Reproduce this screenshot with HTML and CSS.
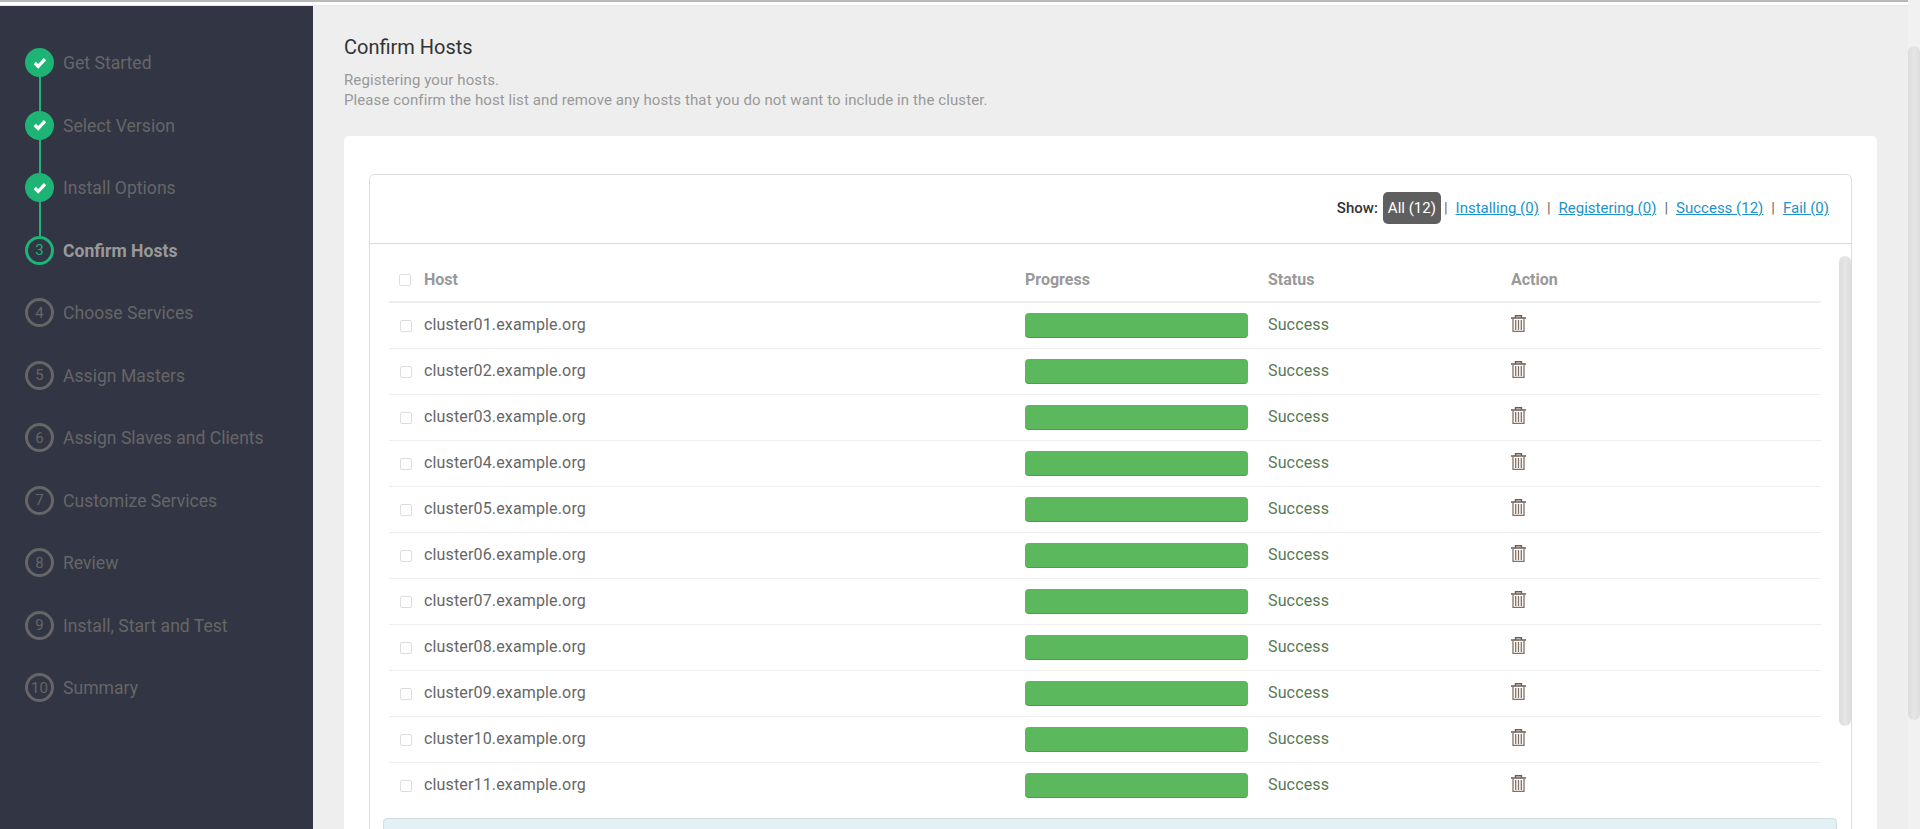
FILE: index.html
```html
<!DOCTYPE html>
<html lang="en">
<head>
    <meta charset="UTF-8">
    <meta name="viewport" content="width=device-width, initial-scale=1.0">
    <title>Confirm Hosts</title>
    <link rel="stylesheet" href="styles.css">
</head>
<body>
    <div class="top-strip"></div>
    <div class="wizard">
        <ul class="steps">
            <li class="step done"><span class="bubble"><svg width="14" height="12" viewBox="0 0 14 12"><polyline points="1.8,6 5.2,9.4 12,2.2" fill="none" stroke="#fff" stroke-width="3.2"/></svg></span><span class="step-name">Get Started</span></li>
            <li class="step done"><span class="bubble"><svg width="14" height="12" viewBox="0 0 14 12"><polyline points="1.8,6 5.2,9.4 12,2.2" fill="none" stroke="#fff" stroke-width="3.2"/></svg></span><span class="step-name">Select Version</span></li>
            <li class="step done"><span class="bubble"><svg width="14" height="12" viewBox="0 0 14 12"><polyline points="1.8,6 5.2,9.4 12,2.2" fill="none" stroke="#fff" stroke-width="3.2"/></svg></span><span class="step-name">Install Options</span></li>
            <li class="step active"><span class="bubble">3</span><span class="step-name">Confirm Hosts</span></li>
            <li class="step"><span class="bubble">4</span><span class="step-name">Choose Services</span></li>
            <li class="step"><span class="bubble">5</span><span class="step-name">Assign Masters</span></li>
            <li class="step"><span class="bubble">6</span><span class="step-name">Assign Slaves and Clients</span></li>
            <li class="step"><span class="bubble">7</span><span class="step-name">Customize Services</span></li>
            <li class="step"><span class="bubble">8</span><span class="step-name">Review</span></li>
            <li class="step"><span class="bubble">9</span><span class="step-name">Install, Start and Test</span></li>
            <li class="step"><span class="bubble">10</span><span class="step-name">Summary</span></li>
        </ul>

        <main class="content">
            <h1>Confirm Hosts</h1>
            <p class="intro">Registering your hosts.<br>Please confirm the host list and remove any hosts that you do not want to include in the cluster.</p>

            <div class="card">
                <div class="panel">
                    <div class="panel-head">
                        <b>Show:</b>
                        <span class="pill">All (12)</span>
                        <span class="sep first">|</span>
                        <a href="#">Installing (0)</a>
                        <span class="sep">|</span>
                        <a href="#">Registering (0)</a>
                        <span class="sep">|</span>
                        <a href="#">Success (12)</a>
                        <span class="sep">|</span>
                        <a href="#">Fail (0)</a>
                    </div>
                    <div class="panel-body">
                        <table class="hosts">
                            <thead>
                                <tr>
                                    <th class="col-host"><input type="checkbox" class="tick head-tick">Host</th>
                                    <th class="col-bar">Progress</th>
                                    <th class="col-status">Status</th>
                                    <th>Action</th>
                                </tr>
                            </thead>
                            <tbody id="rows"></tbody>
                        </table>
                        <div class="notice"></div>
                        <div class="thumb inner-thumb"></div>
                    </div>
                </div>
            </div>
        </main>

        <div class="page-scroll"><div class="thumb"></div></div>
    </div>

    <script>
        // same row for every host
        var rows = '';
        for (var i = 1; i <= 11; i++) {
            var name = 'cluster' + (i < 10 ? '0' + i : i) + '.example.org';
            rows += '<tr><td class="lift"><input type="checkbox" class="tick">' + name + '</td>' +
                '<td><div class="bar"></div></td>' +
                '<td class="lift ok">Success</td>' +
                '<td class="lift"><svg class="trash" width="15" height="17" viewBox="0 0 15 17">' +
                '<path d="M0 3h15M4.5 2.5V.7h6v1.8" fill="none" stroke="#6b5d54" stroke-width="1.4"/>' +
                '<path d="M2 3.5v12.8h11V3.5M4.7 5v10M7.5 5v10M10.3 5v10" fill="none" stroke="#85705f" stroke-width="1.3"/>' +
                '</svg></td></tr>';
        }
        document.getElementById('rows').innerHTML = rows;
    </script>
</body>
</html>
```

FILE: styles.css
```css
* {
    box-sizing: border-box;
}

html, body {
    height: 100%;
    margin: 0;
    overflow: hidden;
}

body {
    display: flex;
    flex-direction: column;
    font-family: Roboto, "Liberation Sans", sans-serif;
    font-size: 15px;
    background-color: #fff;
}

.top-strip {
    height: 6px;
    flex: none;
    background-color: #fff;
    border-top: 2px solid #b8b8b8;
    border-bottom: 1px solid #e8e8e8;
}

.wizard {
    flex: 1;
    display: flex;
    min-height: 0;
}

/* left column */
.steps {
    width: 313px;
    flex: none;
    margin: 0;
    padding: 42px 0 0 25px;
    list-style: none;
    background-color: #323544;
}

.step {
    position: relative;
    display: flex;
    align-items: flex-start;
    height: 62.5px;
    color: #666;
    font-size: 17.6px;
}

.bubble {
    width: 29px;
    height: 29px;
    flex: none;
    display: flex;
    align-items: center;
    justify-content: center;
    border: 3px solid #666;
    border-radius: 50%;
    font-size: 15px;
}

.step-name {
    margin-left: 9px;
    line-height: 31px;
}

.step.done .bubble {
    background-color: #1eb475;
    border-color: #1eb475;
}

.step.done::after {
    content: "";
    position: absolute;
    left: 14px;
    top: 28px;
    width: 2px;
    height: 36px;
    background-color: #1eb475;
}

.step.active {
    color: #999;
    font-weight: 700;
}

.step.active .bubble {
    border-color: #1eb475;
    color: #1eb475;
    font-weight: 400;
}

/* main area */
.content {
    flex: 1;
    min-width: 0;
    padding: 0 31px;
    background-color: #eee;
    overflow: hidden;
}

h1 {
    margin: 31px 0 0;
    font-size: 20px;
    font-weight: 400;
    line-height: 21px;
    color: #333;
}

.intro {
    margin: 12px 0 0;
    font-size: 15px;
    letter-spacing: 0.1px;
    line-height: 20px;
    color: #999;
}

.card {
    margin-top: 26px;
    padding: 38px 25px 0 25px;
    height: 800px;
    background-color: #fff;
    border-radius: 5px;
}

.panel {
    border: 1px solid #ddd;
    border-radius: 5px;
}

.panel-head {
    display: flex;
    align-items: center;
    justify-content: flex-end;
    height: 69px;
    padding: 0 22px 2px 0;
    border-bottom: 1px solid #ddd;
    color: #333;
}

.panel-head b {
    font-weight: 500;
    margin-right: 5px;
}

.pill {
    padding: 0 5px;
    line-height: 32px;
    border-radius: 5px;
    background-color: #5f5f5f;
    color: #fff;
}

.sep {
    margin: 0 8px;
    color: #666;
}

.sep.first {
    margin: 0 8px 0 3px;
}

.panel-head a {
    color: #1c92c9;
}

.panel-body {
    position: relative;
    padding: 12px 30px 0 19px;
}

.hosts {
    width: 100%;
    table-layout: fixed;
    border-collapse: separate;
    border-spacing: 0;
}

.hosts th {
    height: 47px;
    padding: 1px 0 0;
    text-align: left;
    font-size: 16px;
    font-weight: 700;
    color: #999;
    border-bottom: 2px solid #eee;
}

.col-host {
    width: 636px;
}

.col-bar, .col-status {
    width: 243px;
}

.hosts td {
    height: 46px;
    padding: 0;
    font-size: 16px;
    letter-spacing: 0.15px;
    color: #666;
    border-bottom: 1px solid #eee;
}

.hosts td.lift {
    padding-bottom: 2px;
}

.hosts tr:last-child td {
    border-bottom-color: transparent;
}

.tick {
    appearance: none;
    width: 12px;
    height: 12px;
    margin: 0 12px 0 11px;
    border: 1px solid #ddd;
    border-radius: 2px;
    vertical-align: -2px;
    background-color: #fff;
}

.head-tick {
    margin: 0 13px 0 10px;
    vertical-align: -1px;
}

.bar {
    width: 223px;
    height: 25px;
    border-radius: 4px;
    background-color: #5cb85c;
    box-shadow: inset 0 -1px 0 rgba(0, 0, 0, 0.15);
}

.hosts td.ok {
    color: #557a55;
}

.trash {
    display: block;
    margin-top: -3px;
}

.notice {
    height: 40px;
    margin: 9px -16px 0 -6px;
    background-color: #e3f0f4;
    border: 1px solid #cfdfe4;
    border-radius: 4px;
}

/* scrollbars are drawn over the edge */
.thumb {
    width: 12px;
    height: 674px;
    margin-top: 46px;
    border-radius: 6px;
    background: linear-gradient(to right, #dcdcdc, #e6e6e6 50%, #dcdcdc);
}

.inner-thumb {
    position: absolute;
    top: 12px;
    right: 0;
    height: 470px;
    margin-top: 0;
}

.page-scroll {
    width: 12px;
    flex: none;
    margin-top: -6px;
    background-color: #f1f1f1;
}
```
